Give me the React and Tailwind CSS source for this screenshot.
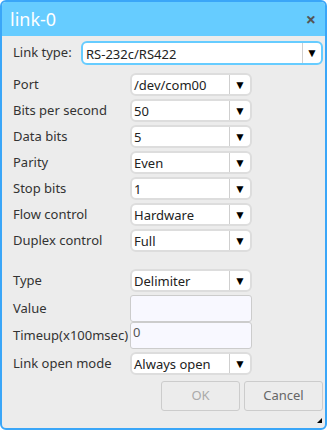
import React from "react";

const F = { fontFamily: '"Noto Sans", "Liberation Sans", sans-serif' };

function Sel({ value }) {
  return (
    <div className="flex h-[23px] w-[122px] items-stretch rounded-[6px] border-2 border-[#dddddd] bg-white">
      <div className="flex flex-1 items-center pl-[2px] pt-[3px] text-[13px] text-[#222]">{value}</div>
      <div className="flex w-[21px] items-center justify-center border-l border-[#cfcfcf] text-[12px] text-black">▼</div>
    </div>
  );
}

function Row({ label, children }) {
  return (
    <div className="flex h-[23px] items-center">
      <div className="w-[117px] text-[13px] text-[#333]">{label}</div>
      {children}
    </div>
  );
}

export default function App() {
  return (
    <div className="bg-white w-[331px] h-[430px]" style={F}>
      <div className="flex h-[430px] w-[327px] flex-col overflow-hidden rounded-[6px] border-2 border-[#3aa6f8] bg-[#ececec]">
        <div className="flex h-[34px] shrink-0 items-center justify-between bg-[#66ccff] pl-[8px] pr-[9px]">
          <span className="text-[18px] leading-none text-white">link-0</span>
          <span className="text-[18px] font-bold leading-none text-[#555]">×</span>
        </div>
        <div className="relative flex flex-1 flex-col pl-[11px] pt-[5px]">
          <div className="flex h-[24px] items-center">
            <div className="w-[68px] text-[13px] text-[#333]">Link type:</div>
            <div className="flex h-[24px] w-[242px] items-stretch rounded-[6px] border-2 border-[#66ccff] bg-white">
              <div className="flex flex-1 items-center pl-[3px] pt-[3px] text-[13px] text-[#222]">RS-232c/RS422</div>
              <div className="flex w-[19px] items-center justify-center border-l border-[#cfcfcf] text-[12px] text-black">▼</div>
            </div>
          </div>
          <div className="mt-[8px] flex flex-col gap-[3px]">
            <Row label="Port"><Sel value="/dev/com00" /></Row>
            <Row label="Bits per second"><Sel value="50" /></Row>
            <Row label="Data bits"><Sel value="5" /></Row>
            <Row label="Parity"><Sel value="Even" /></Row>
            <Row label="Stop bits"><Sel value="1" /></Row>
            <Row label="Flow control"><Sel value="Hardware" /></Row>
            <Row label="Duplex control"><Sel value="Full" /></Row>
          </div>
          <div className="mt-[17px] flex flex-col">
            <Row label="Type"><Sel value="Delimiter" /></Row>
            <div className="mt-[3px] flex h-[27px] items-center">
              <div className="w-[117px] text-[13px] text-[#333]">Value</div>
              <div className="h-[27px] w-[122px] rounded-[3px] border border-[#cccccc] bg-[#f8f8ff]" />
            </div>
            <div className="flex h-[27px] items-center">
              <div className="w-[117px] text-[13px] text-[#333]">Timeup(x100msec)</div>
              <div className="h-[27px] w-[122px] rounded-[3px] border border-[#cccccc] bg-[#f8f8ff] pl-[2px] text-[13px] leading-[18px] text-[#555]">0</div>
            </div>
            <div className="mt-[3px]">
              <Row label="Link open mode"><Sel value="Always open" /></Row>
            </div>
          </div>
          <div className="mt-[6px] flex justify-end gap-[4px] pr-[2px]">
            <div className="flex h-[30px] w-[79px] items-center justify-center rounded-[3px] border border-[#cccccc] text-[13px] text-[#aaaaaa]">OK</div>
            <div className="flex h-[30px] w-[79px] items-center justify-center rounded-[3px] border border-[#cccccc] text-[13px] text-[#666666]">Cancel</div>
          </div>
          <div className="absolute bottom-[5px] right-[3px] h-0 w-0 border-b-[5px] border-l-[5px] border-b-black border-l-transparent" />
        </div>
      </div>
    </div>
  );
}
